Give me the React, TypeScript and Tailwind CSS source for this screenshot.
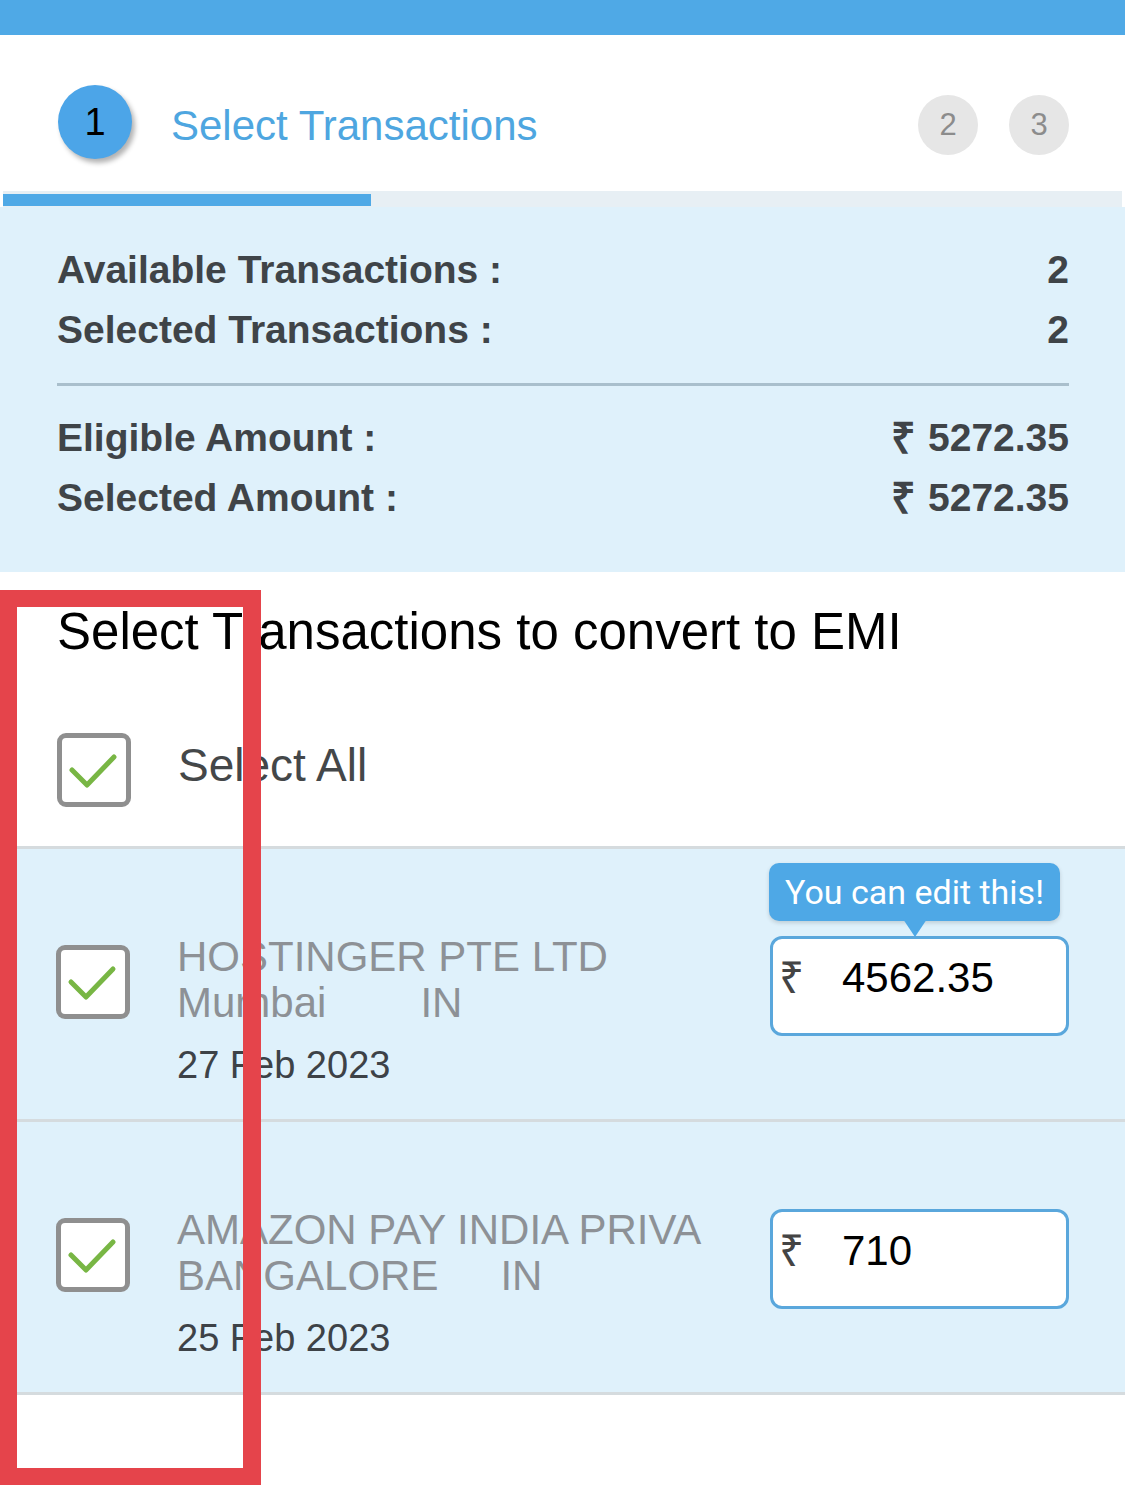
import React from 'react';

const summary = [
  { label: 'Available Transactions :', value: '2' },
  { label: 'Selected Transactions :', value: '2' },
];

const amounts = [
  { label: 'Eligible Amount :', value: '5272.35' },
  { label: 'Selected Amount :', value: '5272.35' },
];

const transactions = [
  { merchant: 'HOSTINGER PTE LTD', city: 'Mumbai', cityGap: 'ml-[94px]', date: '27 Feb 2023', amount: '4562.35', hint: true },
  { merchant: 'AMAZON PAY INDIA PRIVA', city: 'BANGALORE', cityGap: 'ml-[62px]', date: '25 Feb 2023', amount: '710', hint: false },
];

function CheckBox() {
  return (
    <div className="w-[74px] h-[74px] shrink-0 border-[5px] border-[#8f8f8f] rounded-[9px] bg-white">
      <svg viewBox="0 0 64 64" className="w-full h-full">
        <path d="M10 32 L25 47 L52 19" fill="none" stroke="#78b644" strokeWidth="5" strokeLinecap="round" strokeLinejoin="round" />
      </svg>
    </div>
  );
}

export default function App() {
  return (
    <div className="relative w-[1125px] min-h-[1500px] bg-white font-['Liberation_Sans',Arial,sans-serif]">
      <div className="h-[35px] bg-[#4fa9e6]" />

      {/* stepper */}
      <div className="h-[156px] pt-[50px] pl-[58px] pr-[56px]">
        <div className="flex items-center">
          <div className="w-[74px] h-[74px] rounded-full bg-[#4ca5e8] shadow-[3px_4px_5px_rgba(0,0,0,0.3)] flex items-center justify-center text-[38px] text-black">1</div>
          <div className="ml-[39px] mt-[6px] text-[42px] text-[#4ea6e0]">Select Transactions</div>
          <div className="ml-auto mt-[6px] flex gap-[31px]">
            <div className="w-[60px] h-[60px] rounded-full bg-[#e6e6e6] flex items-center justify-center text-[31px] text-[#8c8c8c]">2</div>
            <div className="w-[60px] h-[60px] rounded-full bg-[#e6e6e6] flex items-center justify-center text-[31px] text-[#8c8c8c]">3</div>
          </div>
        </div>
      </div>

      <div className="h-[16px] px-[3px]">
        <div className="h-full bg-[#e7eff4] pt-[3px]">
          <div className="w-[368px] h-[12px] bg-[#4fa9e6]" />
        </div>
      </div>

      {/* summary */}
      <div className="h-[365px] bg-[#dff1fb] pl-[57px] pr-[56px] pt-[33px] text-[39px] font-bold text-[#3f4448]">
        {summary.map((r) => (
          <div key={r.label} className="h-[60px] flex items-center justify-between">
            <span>{r.label}</span>
            <span>{r.value}</span>
          </div>
        ))}
        <div className="mt-[23px] h-[3px] bg-[#a9bfcc]" />
        <div className="mt-[22px]">
          {amounts.map((r) => (
            <div key={r.label} className="h-[60px] flex items-center justify-between">
              <span>{r.label}</span>
              <span className="flex items-center">
                <span className="text-[43px] leading-none mr-[12px]">₹</span>
                {r.value}
              </span>
            </div>
          ))}
        </div>
      </div>

      {/* select all */}
      <div className="h-[277px] pt-[30px] pl-[57px] border-b-[3px] border-[#d5dbde]">
        <div className="h-[60px] flex items-center text-[51px] text-black">Select Transactions to convert to EMI</div>
        <div className="mt-[71px] h-[74px] flex items-center">
          <CheckBox />
          <span className="ml-[47px] mb-[10px] text-[46px] text-[#444749]">Select All</span>
        </div>
      </div>

      {transactions.map((t) => (
        <div key={t.merchant} className="h-[273px] bg-[#dff1fb] border-b-[3px] border-[#d5dbde] flex items-center pl-[56px] pr-[56px]">
          <div className="mb-[4px]">
            <CheckBox />
          </div>
          <div className="ml-[47px] mt-[52px]">
            <div className="text-[42px] leading-[46px] text-[#8d9196] whitespace-nowrap">{t.merchant}</div>
            <div className="text-[42px] leading-[46px] text-[#8d9196] whitespace-nowrap">
              {t.city}
              <span className={t.cityGap}>IN</span>
            </div>
            <div className="mt-[17px] text-[38px] leading-[44px] text-[#3d4247]">{t.date}</div>
          </div>
          <div className="relative ml-auto mt-[4px]">
            {t.hint && (
              <div className="absolute left-[-1px] top-[-73px] w-[291px] h-[58px] rounded-[10px] bg-[#4ea8e6] shadow-[0_2px_4px_rgba(0,0,0,0.15)] flex items-center justify-center font-['Roboto',sans-serif] text-[34px] text-white">
                You can edit this!
                <div className="absolute left-[134px] top-[56px] w-0 h-0 border-l-[12px] border-r-[12px] border-t-[18px] border-l-transparent border-r-transparent border-t-[#4ea8e6]" />
              </div>
            )}
            <div className="w-[299px] h-[100px] border-[3px] border-[#5aa7dc] rounded-[12px] bg-white pt-[16px] pl-[6px]">
              <div className="h-[46px] flex items-center">
                <span className="w-[63px] text-[44px] leading-none text-[#444]">₹</span>
                <span className="text-[42px] leading-none text-black">{t.amount}</span>
              </div>
            </div>
          </div>
        </div>
      ))}

      {/* annotation frame */}
      <div className="absolute left-0 top-[590px] w-[261px] h-[895px] border-[17px] border-r-[18px] border-[#e5444b]" />
    </div>
  );
}
